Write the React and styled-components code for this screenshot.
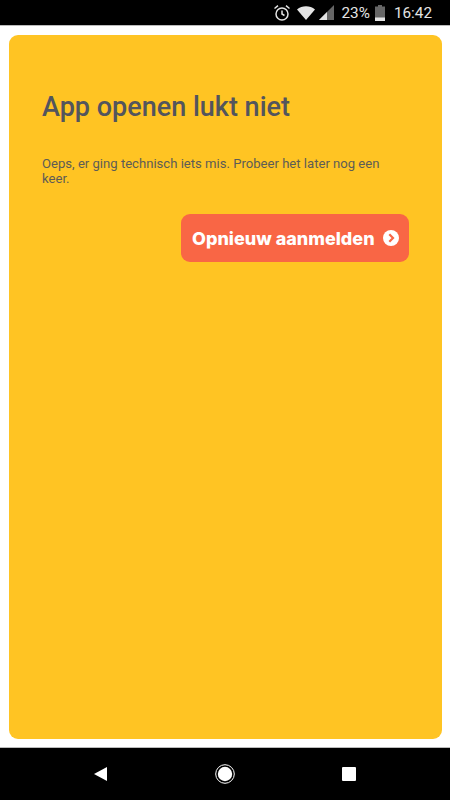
import React from 'react'
import styled, { createGlobalStyle } from 'styled-components'

const Global = createGlobalStyle`
  html, body {
    margin: 0;
    padding: 0;
    background: #fff;
  }
  * {
    box-sizing: border-box;
  }
`

const Screen = styled.div`
  width: 450px;
  height: 800px;
  display: flex;
  flex-direction: column;
  overflow: hidden;
  font-family: Roboto, "Liberation Sans", sans-serif;
`

const StatusBar = styled.div`
  height: 26px;
  flex: none;
  background: #000;
  color: #e4e4e4;
  display: flex;
  align-items: center;
  justify-content: flex-end;
  padding-right: 18px;
  font-size: 15.3px;
  border-bottom: 1px solid #bbb;
`

const AlarmIcon = styled.svg`
  width: 18px;
  height: 18px;
  margin-right: 6px;
`

const WifiIcon = styled.svg`
  width: 18px;
  height: 14px;
  margin-right: 4px;
`

const SignalIcon = styled.svg`
  width: 15px;
  height: 15px;
  margin-right: 8px;
`

const Percent = styled.span`
  margin-right: 5px;
`

const BatteryIcon = styled.svg`
  width: 10px;
  height: 16px;
  margin-right: 9px;
`

const Main = styled.main`
  flex: 1;
  padding: 9px 8px 8px 9px;
  background: #fff;
`

const Card = styled.section`
  height: 100%;
  background: #ffc423;
  border-radius: 9px;
  padding: 56px 33px 0 33px;
  display: flex;
  flex-direction: column;
`

const Title = styled.h1`
  margin: 0;
  color: #53555d;
  font-family: Roboto, "Noto Sans", sans-serif;
  font-size: 27px;
  line-height: 32px;
  font-weight: 500;
`

const Message = styled.p`
  margin: 33px 0 0;
  color: #5d5c56;
  font-size: 13.1px;
  line-height: 15px;
`

const Action = styled.button`
  align-self: flex-end;
  margin-top: 28px;
  height: 48px;
  width: 228px;
  border: 0;
  border-radius: 9px;
  background: #f96645;
  color: #fff;
  font-family: Inter, Roboto, sans-serif;
  font-weight: 800;
  font-size: 18px;
  padding: 0 10px 0 11px;
  display: flex;
  align-items: center;
  justify-content: space-between;
  white-space: nowrap;
`

const ActionIcon = styled.svg`
  width: 16px;
  height: 16px;
  flex: none;
`

const NavBar = styled.nav`
  height: 53px;
  flex: none;
  background: #000;
  border-top: 1px solid #bbb;
  display: flex;
  align-items: center;
  justify-content: space-between;
  padding: 0 94px;
`

const NavIcon = styled.svg`
  width: ${p => p.size}px;
  height: ${p => p.size}px;
`

const App = () => {
  return (
    <Screen>
      <Global />
      <StatusBar>
        <AlarmIcon viewBox="0 0 18 18" fill="none" stroke="#e4e4e4" strokeWidth="1.5">
          <circle cx="9" cy="10" r="6" />
          <path d="M9 6.5V10l2.5 1.5M1.5 4.5 5 1.7M16.5 4.5 13 1.7" />
        </AlarmIcon>
        <WifiIcon viewBox="0 0 18 14">
          <path d="M0 3.5C5-.9 13-.9 18 3.5L9 14z" fill="#e4e4e4" />
        </WifiIcon>
        <SignalIcon viewBox="0 0 15 15">
          <path d="M15 0v15H0z" fill="#666" />
          <path d="M8 7v8H0z" fill="#e4e4e4" />
        </SignalIcon>
        <Percent>23%</Percent>
        <BatteryIcon viewBox="0 0 10 16">
          <path d="M3 0h4v1.5h3V16H0V1.5h3z" fill="#666" />
          <path d="M0 12.5h10V16H0z" fill="#e4e4e4" />
        </BatteryIcon>
        <span>16:42</span>
      </StatusBar>
      <Main>
        <Card>
          <Title>App openen lukt niet</Title>
          <Message>Oeps, er ging technisch iets mis. Probeer het later nog een keer.</Message>
          <Action>
            Opnieuw aanmelden
            <ActionIcon viewBox="0 0 16 16">
              <circle cx="8" cy="8" r="8" fill="#fff" />
              <path d="M6.3 4.3 10 8l-3.7 3.7" fill="none" stroke="#f96645" strokeWidth="2.2" />
            </ActionIcon>
          </Action>
        </Card>
      </Main>
      <NavBar>
        <NavIcon size={14} viewBox="0 0 14 14">
          <path d="M13 0v14L0 7z" fill="#fff" />
        </NavIcon>
        <NavIcon size={20} viewBox="0 0 20 20">
          <circle cx="10" cy="10" r="9.3" fill="none" stroke="#fff" strokeWidth="1" />
          <circle cx="10" cy="10" r="7.2" fill="#fff" />
        </NavIcon>
        <NavIcon size={14} viewBox="0 0 14 14">
          <rect width="14" height="14" rx="1" fill="#fff" />
        </NavIcon>
      </NavBar>
    </Screen>
  )
}

export default App
